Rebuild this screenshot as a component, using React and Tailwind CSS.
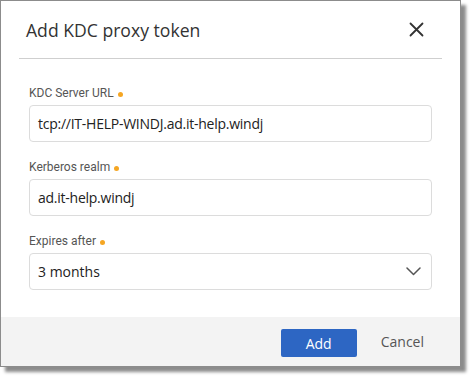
import React from "react";

const Label = ({ children }) => (
  <div className="flex items-center gap-[4px] text-[12px] leading-[17px] text-[#555] mb-[3px]" style={{ fontFamily: "Roboto, sans-serif" }}>
    <span>{children}</span>
    <span className="w-[5px] h-[5px] rounded-full bg-[#f5a623] mt-[2px]" />
  </div>
);

export default function App() {
  return (
    <div className="w-[471px] h-[377px] bg-white relative">
      <div className="w-[461px] h-[367px] border border-[#8c8c8c] bg-white flex flex-col shadow-[5px_5px_3px_rgba(0,0,0,0.45)]" style={{ fontFamily: "'Open Sans', sans-serif" }}>
        <div className="mx-[18px] h-[58px] shrink-0 border-b border-[#cfcfcf] flex items-center justify-between pl-[7px] pr-[18px] pt-[2px]">
          <span className="text-[17.6px] text-[#333]">Add KDC proxy token</span>
          <svg width="15" height="15" viewBox="0 0 15 15" className="mt-[-2px]">
            <path d="M1.5 1.5 L13.5 13.5 M13.5 1.5 L1.5 13.5" stroke="#333" strokeWidth="1.8" strokeLinecap="round" />
          </svg>
        </div>
        <div className="px-[28px] pt-[26px] flex flex-col">
          <Label>KDC Server URL</Label>
          <div className="h-[37px] border border-[#dcdcdc] rounded-[4px] flex items-center px-[8px] text-[14px] tracking-[-0.25px] text-[#222]">
            tcp://IT-HELP-WINDJ.ad.it-help.windj
          </div>
          <div className="h-[17px]" />
          <Label>Kerberos realm</Label>
          <div className="h-[37px] border border-[#dcdcdc] rounded-[4px] flex items-center px-[8px] text-[14px] tracking-[-0.25px] text-[#222]">
            ad.it-help.windj
          </div>
          <div className="h-[17px]" />
          <Label>Expires after</Label>
          <div className="h-[37px] border border-[#dcdcdc] rounded-[4px] flex items-center justify-between pl-[8px] pr-[10px] text-[14px] text-[#222]">
            <span>3 months</span>
            <svg width="15" height="9" viewBox="0 0 15 9">
              <path d="M1 1 L7.5 7.5 L14 1" fill="none" stroke="#555" strokeWidth="1.5" strokeLinecap="round" strokeLinejoin="round" />
            </svg>
          </div>
        </div>
        <div className="flex-1" />
        <div className="h-[49px] bg-[#f3f3f3] flex items-center justify-end pr-[36px] gap-[24px]">
          <button className="w-[76px] h-[28px] rounded-[2px] bg-[#2d66c3] text-white text-[14px] mt-[3px]">Add</button>
          <span className="text-[14px] text-[#555]">Cancel</span>
        </div>
      </div>
    </div>
  );
}
